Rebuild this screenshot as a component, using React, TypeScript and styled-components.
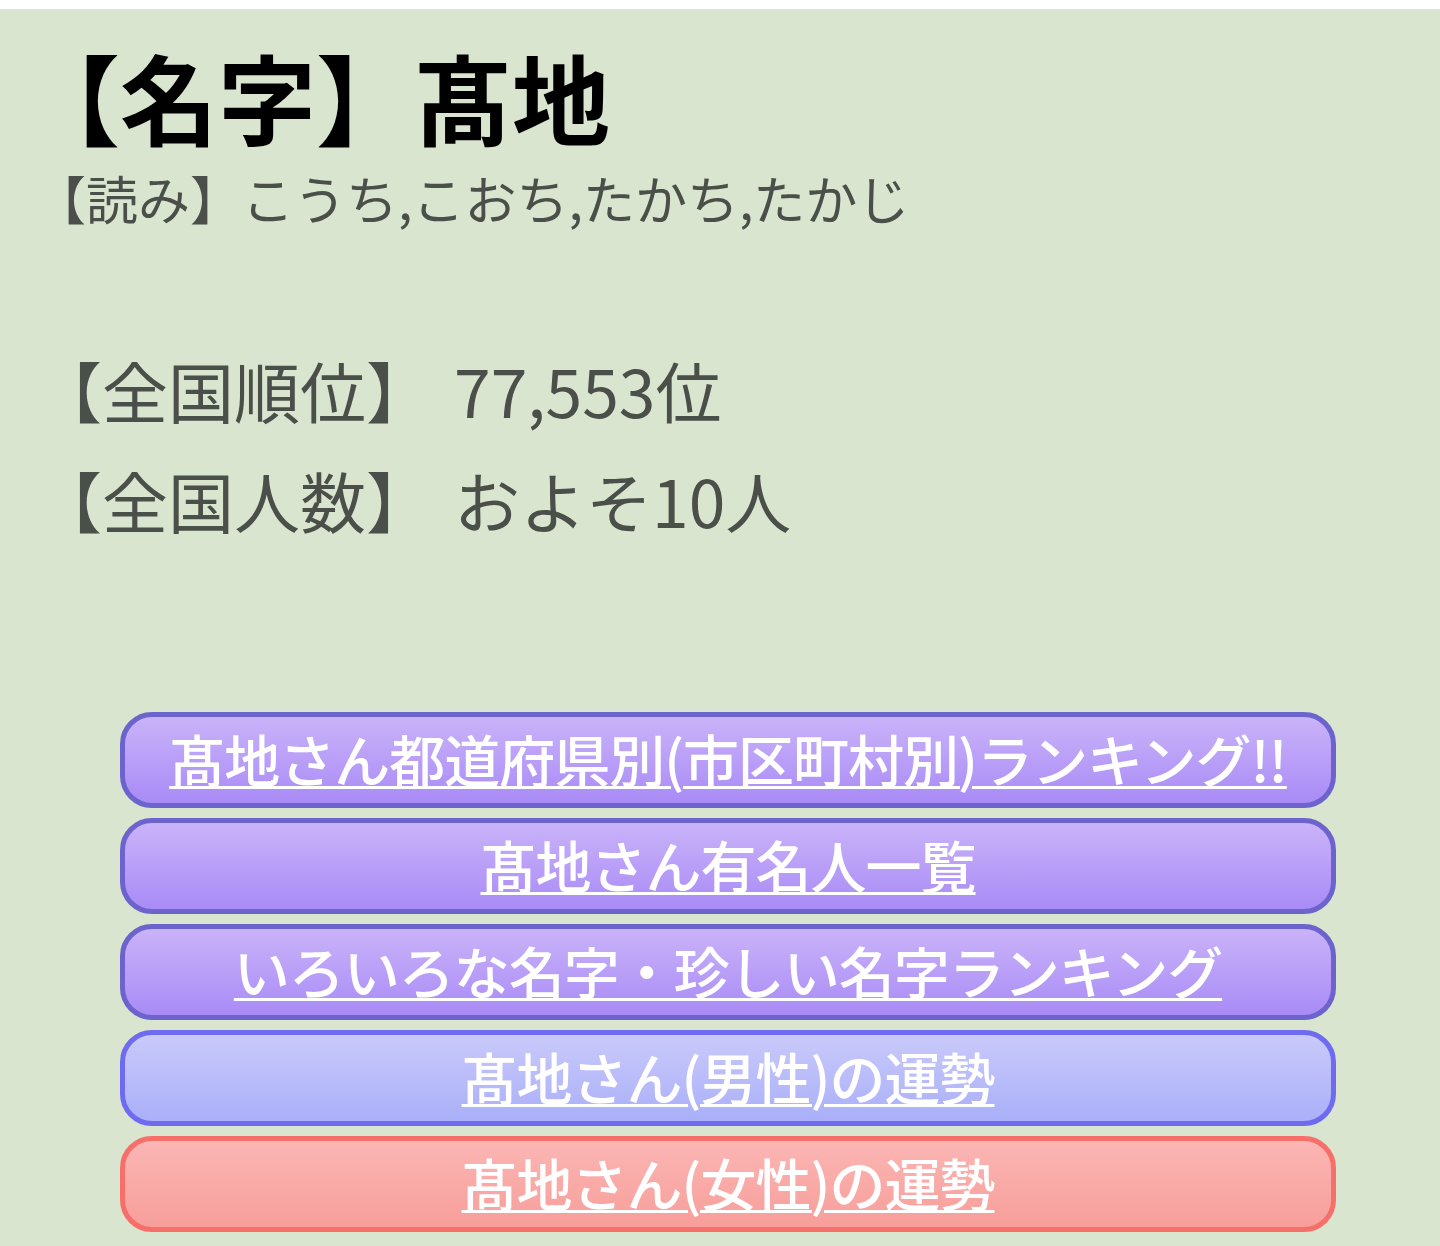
import React from "react";
import styled, { createGlobalStyle } from "styled-components";

const Global = createGlobalStyle`
  html, body { margin: 0; padding: 0; background: #ffffff; }
  body { font-family: "Noto Sans CJK JP", "Noto Sans", sans-serif; }
`;

const Page = styled.main`
  margin-top: 9px;
  background: #d9e5cf;
  min-height: 1237px;
  box-sizing: border-box;
  padding: 30px 0 14px 0;
`;

const Header = styled.header`
  padding-left: 22px;
`;

const Title = styled.h1`
  margin: 0;
  font-size: 98px;
  line-height: 112px;
  font-weight: 700;
  color: #000;
`;

const Reading = styled.p`
  margin: 17px 0 0 0;
  padding-left: 12px;
  font-size: 52px;
  line-height: 60px;
  color: #4b4f49;
  font-weight: 400;
`;

const Stats = styled.dl`
  margin: 106px 0 0 0;
  padding-left: 36px;
  color: #4b4f49;
  font-size: 66px;
  line-height: 110px;
`;

const StatRow = styled.div`
  display: flex;
  align-items: baseline;
`;

const StatLabel = styled.dt`
  margin: 0;
`;

const StatValue = styled.dd`
  margin: 0 0 0 22px;
`;

const Links = styled.nav`
  margin: 158px 0 0 120px;
  width: 1216px;
  display: flex;
  flex-direction: column;
  gap: 10px;
`;

type Tone = "purple" | "blue" | "red";

const tones: Record<Tone, { top: string; bottom: string; border: string }> = {
  purple: { top: "#c9b3f9", bottom: "#a98bf6", border: "#6c63cd" },
  blue: { top: "#c9c9f9", bottom: "#aab0f9", border: "#6f6bf0" },
  red: { top: "#fbb6b4", bottom: "#f79e9a", border: "#f66f68" },
};

const LinkButton = styled.a<{ $tone: Tone }>`
  box-sizing: border-box;
  height: 96px;
  border: 5px solid ${(p) => tones[p.$tone].border};
  border-radius: 32px;
  background: linear-gradient(
    to bottom,
    ${(p) => tones[p.$tone].top},
    ${(p) => tones[p.$tone].bottom}
  );
  display: flex;
  align-items: center;
  justify-content: center;
  padding-bottom: 6px;
  color: #ffffff;
  font-size: 56px;
  font-weight: 500;
  text-decoration: underline;
  text-decoration-thickness: 3px;
  text-underline-offset: 4px;
  white-space: nowrap;
  letter-spacing: -1px;
`;

const links: { label: string; tone: Tone }[] = [
  { label: "髙地さん都道府県別(市区町村別)ランキング!!", tone: "purple" },
  { label: "髙地さん有名人一覧", tone: "purple" },
  { label: "いろいろな名字・珍しい名字ランキング", tone: "purple" },
  { label: "髙地さん(男性)の運勢", tone: "blue" },
  { label: "髙地さん(女性)の運勢", tone: "red" },
];

export default function App() {
  return (
    <>
      <Global />
      <Page>
        <Header>
          <Title>【名字】髙地</Title>
          <Reading>【読み】こうち,こおち,たかち,たかじ</Reading>
        </Header>
        <Stats>
          <StatRow>
            <StatLabel>【全国順位】</StatLabel>
            <StatValue>77,553位</StatValue>
          </StatRow>
          <StatRow>
            <StatLabel>【全国人数】</StatLabel>
            <StatValue>およそ10人</StatValue>
          </StatRow>
        </Stats>
        <Links>
          {links.map((l) => (
            <LinkButton key={l.label} href="#" $tone={l.tone}>
              {l.label}
            </LinkButton>
          ))}
        </Links>
      </Page>
    </>
  );
}
